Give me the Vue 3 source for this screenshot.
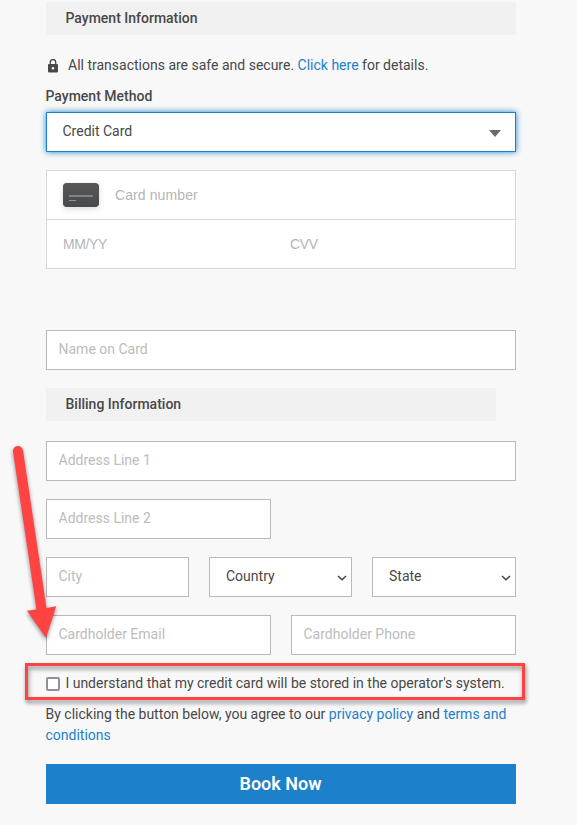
<template>
  <div class="payment-page">
    <h3 class="section-title">Payment Information</h3>

    <p class="secure">
      <svg class="lock" width="10" height="14" viewBox="0 0 10 14">
        <path d="M2.3 6V3.3a2.7 2.7 0 0 1 5.4 0V6" fill="none" stroke="#484848" stroke-width="1.3" />
        <path fill-rule="evenodd" d="M1 5h8a1 1 0 0 1 1 1v6.5a1 1 0 0 1-1 1H1a1 1 0 0 1-1-1V6a1 1 0 0 1 1-1zM5 8a1.3 1.3 0 1 0 0 2.6a1.3 1.3 0 1 0 0-2.6z" fill="#484848" />
      </svg>
      <span class="secure-text">All transactions are safe and secure. <a href="#">Click here</a> for details.</span>
    </p>

    <label class="method-label" for="method">Payment Method</label>
    <div class="select-wrap method">
      <select id="method" v-model="method">
        <option>Credit Card</option>
      </select>
      <svg class="caret" width="12" height="7" viewBox="0 0 12 7"><path d="M0 0h12L6 7z" fill="#6b6b6b" /></svg>
    </div>

    <div class="card-box">
      <div class="card-row">
        <svg class="card-icon" width="36" height="24" viewBox="0 0 36 24">
          <defs>
            <linearGradient id="cardFill" x1="0" y1="0" x2="0" y2="1">
              <stop offset="0" stop-color="#565759" />
              <stop offset="1" stop-color="#48494d" />
            </linearGradient>
          </defs>
          <rect width="36" height="24" rx="3" fill="url(#cardFill)" />
          <path d="M6 12h24v2H6z" fill="#828385" />
          <path d="M6 17h7v1H6z" fill="#949597" />
        </svg>
        <input v-model="form.number" class="number" placeholder="Card number">
      </div>
      <div class="card-row split">
        <input v-model="form.expiry" class="expiry" placeholder="MM/YY">
        <input v-model="form.cvv" class="cvv" placeholder="CVV">
      </div>
    </div>

    <input v-model="form.name" class="field" placeholder="Name on Card">

    <h3 class="section-title billing">Billing Information</h3>

    <div class="billing-fields">
      <input v-model="form.address1" class="field" placeholder="Address Line 1">
      <input v-model="form.address2" class="field half" placeholder="Address Line 2">
      <div class="row thirds">
        <input v-model="form.city" class="field" placeholder="City">
        <div v-for="item in ['Country', 'State']" :key="item" class="select-wrap">
          <select :aria-label="item">
            <option>{{ item }}</option>
          </select>
          <svg class="chevron" width="10" height="6" viewBox="0 0 10 6"><path d="M1 1l4 3.8L9 1" fill="none" stroke="#444" stroke-width="1.5" /></svg>
        </div>
      </div>
      <div class="row halves">
        <input v-model="form.email" class="field" placeholder="Cardholder Email">
        <input v-model="form.phone" class="field" placeholder="Cardholder Phone">
      </div>
    </div>

    <label class="consent">
      <input v-model="consent" type="checkbox">
      <span>I understand that my credit card will be stored in the operator's system.</span>
    </label>

    <p class="terms">
      By clicking the button below, you agree to our <a href="#">privacy policy</a> and <a href="#">terms and<br>conditions</a>
    </p>

    <button class="book">Book Now</button>

    <!-- callout drawn over the form -->
    <div class="callout-box"></div>
    <svg class="callout-arrow" width="80" height="220" viewBox="0 0 80 220">
      <path d="M13 21.5a5 5 0 0 1 10-.9L46.5 178l9.7-1.7L46 208 27 180.7l9.5-1.1z" fill="#ff4343" />
    </svg>
  </div>
</template>

<script setup>
import { ref } from "vue";

const method = ref("Credit Card");
const consent = ref(false);
const form = ref({
  number: "",
  expiry: "",
  cvv: "",
  name: "",
  address1: "",
  address2: "",
  city: "",
  email: "",
  phone: "",
});
</script>

<style>
body {
  background: #f8f8f8;
}
</style>

<style scoped>
.payment-page {
  position: relative;
  box-sizing: border-box;
  width: 577px;
  height: 825px;
  padding: 2px 61px 0 46px;
  overflow: hidden;
  background: #f8f8f8;
  color: #484848;
  font-family: Roboto, sans-serif;
  font-size: 14px;
  line-height: 21px;
}

.payment-page *,
.payment-page input {
  box-sizing: border-box;
}

a {
  color: #1c80cb;
  text-decoration: none;
}

.section-title {
  height: 33px;
  margin: 0;
  padding-left: 19.5px;
  background: #f1f1f1;
  font-size: 14px;
  font-weight: 500;
  line-height: 33px;
}

.secure {
  display: flex;
  align-items: flex-start;
  height: 21px;
  margin: 20px 0 0;
}

.lock {
  flex: none;
  margin: 4px 10px 0 2px;
}

.method-label {
  display: block;
  height: 21px;
  margin: 10px 0 5px -0.5px;
  font-weight: 500;
}

.select-wrap {
  position: relative;
  height: 40px;
}

select {
  width: 100%;
  height: 40px;
  padding: 0 16px 2px;
  border: 1px solid #b9b9b9;
  border-radius: 0;
  outline: none;
  background: #fff;
  color: #484848;
  font: inherit;
  appearance: none;
}

.method select {
  padding-left: 15.5px;
  border-color: #1c80cb;
  box-shadow: 0 0 6px #1c80cb;
}

.caret {
  position: absolute;
  top: 18px;
  right: 15px;
}

.chevron {
  position: absolute;
  top: 18px;
  right: 5px;
}

.card-box {
  height: 99px;
  margin: 18px 0 61px;
  border: 1px solid #d8d8d8;
  background: #fff;
}

.card-row {
  display: flex;
  align-items: center;
  height: 48px;
  padding-left: 16px;
}

.card-row.split {
  height: 49px;
  border-top: 1px solid #d8d8d8;
}

.card-icon {
  flex: none;
  margin-right: 16px;
  border-radius: 3px;
  box-shadow: 0 2px 6px rgba(0, 0, 0, 0.14);
}

.card-row input {
  height: 40px;
  padding: 0;
  border: 0;
  outline: none;
  background: transparent;
  font-family: "Liberation Sans", Arial, sans-serif;
  font-size: 14px;
}

.card-row .number {
  flex: 1;
  letter-spacing: 0.1px;
}

.card-row .expiry {
  width: 227px;
  letter-spacing: -0.4px;
}

.card-row .cvv {
  width: 200px;
  letter-spacing: -0.3px;
}

.card-row input::placeholder {
  color: #b5b5b5;
}

.field {
  display: block;
  width: 100%;
  min-width: 0;
  height: 40px;
  padding: 0 11.5px 2px;
  border: 1px solid #b9b9b9;
  border-radius: 0;
  outline: none;
  background: #fff;
  color: #484848;
  font: inherit;
}

.field::placeholder {
  color: #bcbcbc;
}

.billing {
  width: 450px;
  margin: 18px 0 20px;
}

.billing-fields {
  display: flex;
  flex-direction: column;
  gap: 18px;
}

.half {
  width: 225px;
}

.row {
  display: grid;
  column-gap: 20px;
}

.thirds {
  grid-template-columns: 143px 143px 144px;
}

.halves {
  grid-template-columns: 1fr 1fr;
}

.consent {
  display: flex;
  height: 21px;
  margin-top: 18px;
  white-space: nowrap;
}

.consent input {
  flex: none;
  width: 14px;
  height: 14px;
  margin: 4px 5.4px 0 0;
  border: 2px solid #8f8f9d;
  border-radius: 2px;
  background: #fff;
  appearance: none;
}

.terms {
  margin: 10px 0 18px -0.5px;
  white-space: nowrap;
}

.book {
  display: block;
  width: 100%;
  height: 40px;
  padding: 0 1px 2px 0;
  border: 0;
  background: #1c80cb;
  color: #fff;
  font-family: inherit;
  font-size: 18px;
  font-weight: 600;
}

.callout-box {
  position: absolute;
  top: 663px;
  left: 25px;
  width: 500px;
  height: 37px;
  border: 3px solid #ff4343;
  filter: drop-shadow(1px 3px 2px rgba(0, 0, 0, 0.45));
  pointer-events: none;
}

.callout-arrow {
  position: absolute;
  top: 430px;
  left: 0;
  filter: drop-shadow(0 2px 2px rgba(0, 0, 0, 0.45));
  pointer-events: none;
}
</style>
